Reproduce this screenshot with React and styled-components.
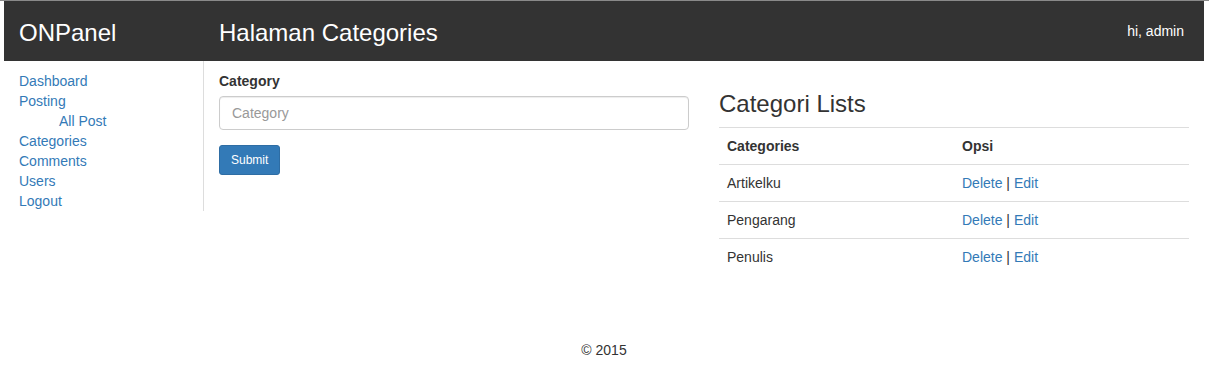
import React from 'react';
import styled, { createGlobalStyle } from 'styled-components';

const GlobalStyle = createGlobalStyle`
  * { box-sizing: border-box; }
  body {
    margin: 0;
    border-top: 1px solid #8a8a8a;
    background: #fff;
    color: #333;
    font-family: "Liberation Sans", Arial, sans-serif;
    font-size: 14px;
    line-height: 20px;
  }
  a { color: #337ab7; text-decoration: none; }
`;

const Page = styled.div`
  width: 1200px;
  margin-left: 4px;
`;

const Header = styled.header`
  height: 60px;
  background: #333;
  color: #fff;
  display: grid;
  grid-template-columns: 200px 1fr auto;
  align-items: center;
`;

const Brand = styled.div`
  padding-left: 15px;
  font-size: 24px;
  line-height: 28px;
  padding-top: 4px;
`;

const PageTitle = styled.div`
  padding-left: 15px;
  font-size: 24px;
  line-height: 28px;
  padding-top: 4px;
`;

const Greeting = styled.div`
  padding-right: 20px;
  font-size: 14px;
`;

const Body = styled.div`
  display: flex;
  align-items: flex-start;
`;

const Sidebar = styled.nav`
  width: 200px;
  flex-shrink: 0;
  padding: 10px 15px 0;
  border-right: 1px solid #ddd;
`;

const NavLink = styled.a`
  display: block;
  padding-left: ${p => (p.$sub ? '40px' : '0')};
`;

const Main = styled.main`
  flex: 1;
  padding: 10px 15px 0;
  display: grid;
  grid-template-columns: 1fr 1fr;
  column-gap: 30px;
  align-items: start;
`;

const FormGroup = styled.div`
  margin-bottom: 15px;
`;

const Label = styled.label`
  display: block;
  font-weight: bold;
  margin-bottom: 5px;
`;

const Input = styled.input`
  display: block;
  width: 100%;
  height: 34px;
  padding: 6px 12px;
  font-family: inherit;
  font-size: 14px;
  color: #555;
  border: 1px solid #ccc;
  border-radius: 4px;
  box-shadow: inset 0 1px 1px rgba(0, 0, 0, 0.075);
  &::placeholder { color: #999; }
`;

const Button = styled.button`
  padding: 5px 11px;
  font-family: inherit;
  font-size: 12px;
  line-height: 18px;
  color: #fff;
  background: #337ab7;
  border: 1px solid #2e6da4;
  border-radius: 3px;
`;

const ListTitle = styled.h3`
  margin: 20px 0 10px;
  font-size: 24px;
  font-weight: 500;
  line-height: 26.4px;
`;

const Table = styled.table`
  width: 100%;
  border-collapse: collapse;
  margin-bottom: 20px;
`;

const Cell = styled.td`
  width: 50%;
  padding: 8px;
  line-height: 20px;
  border-top: 1px solid #ddd;
  text-align: left;
  font-weight: ${p => (p.$head ? 'bold' : 'normal')};
`;

const Footer = styled.footer`
  padding-top: 45px;
  text-align: center;
`;

const categories = ['Artikelku', 'Pengarang', 'Penulis'];

export default function App() {
  return (
    <>
      <GlobalStyle />
      <Page>
        <Header>
          <Brand>ONPanel</Brand>
          <PageTitle>Halaman Categories</PageTitle>
          <Greeting>hi, admin</Greeting>
        </Header>
        <Body>
          <Sidebar>
            <NavLink href="#">Dashboard</NavLink>
            <NavLink href="#">Posting</NavLink>
            <NavLink href="#" $sub>All Post</NavLink>
            <NavLink href="#">Categories</NavLink>
            <NavLink href="#">Comments</NavLink>
            <NavLink href="#">Users</NavLink>
            <NavLink href="#">Logout</NavLink>
          </Sidebar>
          <Main>
            <form>
              <FormGroup>
                <Label>Category</Label>
                <Input placeholder="Category" />
              </FormGroup>
              <Button type="button">Submit</Button>
            </form>
            <div>
              <ListTitle>Categori Lists</ListTitle>
              <Table>
                <tbody>
                  <tr>
                    <Cell as="th" $head>Categories</Cell>
                    <Cell as="th" $head>Opsi</Cell>
                  </tr>
                  {categories.map(name => (
                    <tr key={name}>
                      <Cell>{name}</Cell>
                      <Cell>
                        <a href="#">Delete</a> | <a href="#">Edit</a>
                      </Cell>
                    </tr>
                  ))}
                </tbody>
              </Table>
            </div>
          </Main>
        </Body>
        <Footer>© 2015</Footer>
      </Page>
    </>
  );
}
